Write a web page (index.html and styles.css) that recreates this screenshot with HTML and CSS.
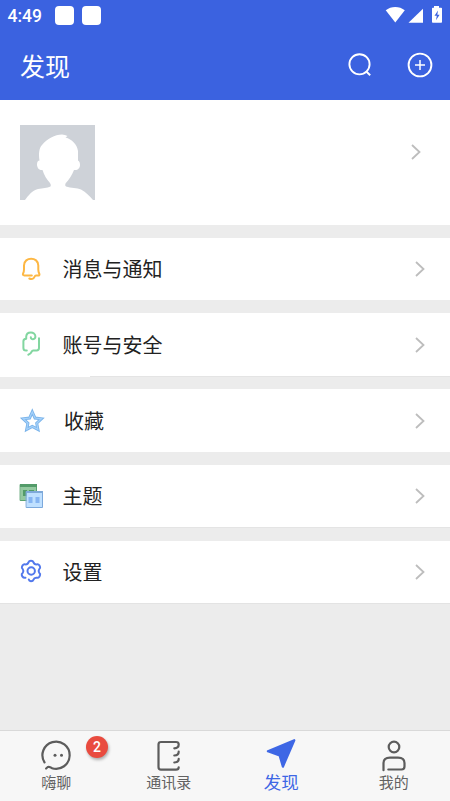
FILE: index.html
```html
<!DOCTYPE html>
<html lang="zh-CN">
<head>
<meta charset="utf-8">
<title>发现</title>
<link rel="stylesheet" href="styles.css">
</head>
<body>
<div class="app">
  <div class="status">
    <span class="clock">4:49</span>
    <i class="chip"></i><i class="chip"></i>
    <svg class="signals" width="60" height="20" viewBox="0 0 60 20">
      <path d="M.7 5.3C6 .8 14.500 .8 19.800 5.300L10.300 17.400z"/>
      <path d="M38 3.700V17.700H23.500z"/>
      <path fill-rule="evenodd" d="M49 1h5v1.700h2.200q.8 0 .8.800V17q0 .8-.8.800h-8.400q-.8 0-.8-.800V3.500q0-.8.800-.8H49zM53 5.500l-3.500 5.200h2.300L51 15.200l3.600-5.500h-2.300z"/>
    </svg>
  </div>
  <header class="header">
    <h1>发现</h1>
    <svg width="26" height="26" viewBox="0 0 26 26"><circle cx="12.500" cy="12.300" r="10.100"/><path d="M19 19.300l4.200 4"/></svg>
    <svg width="26" height="26" viewBox="0 0 26 26"><circle cx="13" cy="13" r="11.400"/><path class="plus" d="M8 13h10M13 8v10"/></svg>
  </header>
  <main>
    <section class="profile">
      <svg class="avatar" width="75" height="75" viewBox="0 0 75 75">
        <rect width="75" height="75" fill="#ced2d8"/>
        <path fill="#fff" d="M5 75C8 71 12 65.500 18 64C23 63 27 63 30.500 61.500Q31.500 60 30 58C26.500 54 24 50 22.500 45C18.500 45.500 17 42 17 39.500C17 37 18 35.500 19.500 35.500C18.500 29 19 23 22 20C27 14 35 9.500 42 9.500Q45 9.500 47.500 11L45.500 12.500C52 14.500 57 19 58 26V35.500C59.500 36 60 38 60 40C60 43 58 45.500 54 45C52 50 49 54.500 45.500 58.500Q44.500 60.500 46 61.500C51 63 57 63 61 64.500C66 67 70 71.500 73 75z"/>
      </svg>
      <svg class="arrow" width="12" height="18" viewBox="0 0 12 18"><path d="M2 2l7.500 7L2 16"/></svg>
    </section>
    <section class="row">
      <svg class="icon bell" width="28" height="28" viewBox="0 0 28 28"><path d="M13.800 20.400H6.300Q4.500 20.400 5 18.700Q6 16.700 6 14.500V10.500C6 1.400 20.300 1.400 20.300 10.500V14.500Q20.300 16.700 21.300 18.700Q22 20.500 20 20.500H18C16.500 20.500 16.600 22.500 15.500 23.300Q13.500 24.700 11.300 23.500"/></svg>
      <span>消息与通知</span>
      <svg class="arrow" width="12" height="18" viewBox="0 0 12 18"><path d="M2 2l7.500 7L2 16"/></svg>
    </section>
    <section class="row tall lined">
      <svg class="icon lock" width="28" height="28" viewBox="0 0 28 28"><path d="M8.800 20.500H8Q5.400 20.500 5.400 18V11.300Q5.400 9 8.200 8.800V6.800C8.400 1 17.400 1.200 17.400 6.500C17.400 9.900 12.600 9.900 12.800 7.200M21 8.300V18Q21 20.400 18.600 20.400H15.300Q14 20.400 13.700 21.700Q12.800 24 10.300 24.800"/></svg>
      <span>账号与安全</span>
      <svg class="arrow" width="12" height="18" viewBox="0 0 12 18"><path d="M2 2l7.500 7L2 16"/></svg>
    </section>
    <section class="row tall favorites">
      <svg class="icon star" width="28" height="28" viewBox="0 0 28 28"><path class="edge" d="M14.300 6l2.700 6 6.400.8-4.700 4.400 1.200 6.200-5.600-3-5.600 3 1.200-6.200-4.700-4.400 6.400-.8z"/><path class="core" d="M14.300 6l2.700 6 6.400.8-4.700 4.400 1.200 6.200-5.600-3-5.600 3 1.200-6.200-4.700-4.400 6.400-.8z"/></svg>
      <span>收藏</span>
      <svg class="arrow" width="12" height="18" viewBox="0 0 12 18"><path d="M2 2l7.500 7L2 16"/></svg>
    </section>
    <section class="row lined theme">
      <svg class="icon" width="28" height="28" viewBox="0 0 28 28">
        <path fill="#94c9a0" stroke="#5aa270" d="M2.500 2.500h16v16h-16z"/><path fill="#539b69" d="M2 2h17v3H2zM5 8h4v6H5zM11 8h5v6h-5z"/>
        <path fill="#bfe0ff" stroke="#7ca9dc" d="M8.500 9.500h16v16h-16z"/><path fill="#7fa9d9" d="M8 9h17v2H8z"/><path fill="#86b5f2" d="M10.500 15h4v6h-4zM17.500 15h4v6h-4z"/>
      </svg>
      <span>主题</span>
      <svg class="arrow" width="12" height="18" viewBox="0 0 12 18"><path d="M2 2l7.500 7L2 16"/></svg>
    </section>
    <section class="row last">
      <svg class="icon gear" width="28" height="28" viewBox="0 0 28 28"><circle cx="13.200" cy="13" r="3.700"/><path d="M7.500 19.700Q5.500 20.100 4.500 18.700L3.800 17.300Q3.300 16 4.800 14.800Q6 13 4.800 11.200Q3.300 10 4 8.600L4.700 7.300Q5.600 5.900 7.400 6.400Q9.800 6.500 10.600 4.200Q11 2.700 13 2.700Q15 2.700 15.400 4.200Q16.200 6.500 18.600 6.400Q20.400 5.900 21.300 7.300L22 8.600Q22.700 10 21.200 11.200Q20 13 21.200 14.800Q22.700 16 22 17.400L21.300 18.700Q20.400 20.100 18.600 19.700Q16.200 19.500 15.400 21.800Q15 23.300 13 23.300Q11.200 23.200 10.800 21.500"/></svg>
      <span>设置</span>
      <svg class="arrow" width="12" height="18" viewBox="0 0 12 18"><path d="M2 2l7.500 7L2 16"/></svg>
    </section>
  </main>
  <nav class="tabs">
    <div class="tab">
      <svg width="32" height="32" viewBox="-.5 0 32 32"><path d="M4 23.400A13.600 13.600 0 1 1 11.500 29.200Q9 27.300 7.300 28L5.600 29.500"/><g class="dots"><circle cx="14.500" cy="16.200" r="1.500"/><circle cx="21" cy="16.200" r="1.500"/></g></svg>
      <span>嗨聊</span><b class="badge">2</b>
    </div>
    <div class="tab">
      <svg width="32" height="32" viewBox="0 0 32 32"><path d="M21.300 9.300Q25.700 9 25.700 5.500Q25.700 3 23 3H8Q5.500 3 5.500 5.500V28Q5.500 30.700 8 30.700H23Q25.700 30.700 25.700 28.300M21.300 16.500Q25.700 16.200 25.700 12.700M21.300 23.500Q25.700 23.200 25.700 19.900"/></svg>
      <span>通讯录</span>
    </div>
    <div class="tab active">
      <svg width="32" height="32" viewBox="-.6 0 32 32"><path d="M28.700 1.200L2.300 12.300L14 16.500L17.300 27.700z"/></svg>
      <span>发现</span>
    </div>
    <div class="tab">
      <svg width="32" height="32" viewBox="0 0 32 32"><circle cx="16" cy="8" r="5.300"/><path d="M5.500 31.200V24Q5.500 18.600 12 18.600H20Q26.500 18.600 26.500 24V27.500Q26.500 30.500 23.500 30.500H10.300"/></svg>
      <span>我的</span>
    </div>
  </nav>
</div>
</body>
</html>
```
FILE: styles.css
```css
* { box-sizing: border-box; }
body { margin: 0; font-family: "Noto Sans CJK SC", sans-serif; background: #ececec; }
.app { width: 450px; height: 801px; display: flex; flex-direction: column; overflow: hidden; }
svg { flex: none; display: block; overflow: visible; }

.status { height: 31px; flex: none; display: flex; align-items: flex-start; padding: 5px 5px 0 7.500px; background: #3b62e0; }
.clock { width: 47px; font: 500 17.500px/22px Roboto, sans-serif; color: #fff; }
.chip { width: 19px; height: 19px; margin: .500px 8.300px 0 0; border-radius: 4px; background: #fff; }
.signals { margin-left: auto; fill: #fff; }

.header { height: 69px; flex: none; display: flex; align-items: flex-start; padding: 21px 17px 0 20px; background: #3b62e0; }
.header h1 { margin: -1px auto 0 0; font-size: 25px; font-weight: 400; line-height: 28px; color: #fff; }
.header svg { margin-left: 34px; fill: none; stroke: #fff; stroke-width: 1.900; }
.header .plus { stroke-width: 1.500; }

main { flex: 1; }
.profile { height: 125px; display: flex; justify-content: space-between; padding: 25px 28px 0 20px; background: #fff; }
.profile .arrow { margin-top: 17.500px; }
.arrow { fill: none; stroke: #bdbdbd; stroke-width: 1.800; }

.row { height: 62px; margin-top: 13px; display: flex; align-items: flex-start; padding: 17px 24.500px 0 18px; background: #fff; font-size: 20px; line-height: 28px; color: #222; }
.row.tall { height: 63px; }
.row.lined { height: 64px; margin-bottom: -1px; background: linear-gradient(#e4e4e4, #e4e4e4) 90px 100% / 100% 1px no-repeat #fff; }
.row.theme { height: 63px; margin-bottom: 0; }
.row.last { height: 63px; border-bottom: 1px solid #e3e3e3; }
.row span { margin-left: 16.500px; }
.row.favorites span { margin-left: 18px; }
.row .arrow { margin: 5px 0 0 auto; }
.row.tall .arrow { margin-top: 5.500px; }
.row.tall span { margin-top: 1px; }
.icon { fill: none; stroke-width: 2; stroke-linecap: round; stroke-linejoin: round; }
.icon path[fill] { stroke-width: 1; stroke-linejoin: miter; }
.bell { stroke: #fdb743; }
.lock { stroke: #82d6a0; }
.gear { stroke: #5278ec; }
.star .edge { stroke: #79b3ea; stroke-width: 3; stroke-linejoin: miter; }
.star .core { stroke: #a5d1fa; stroke-width: 1.200; stroke-linejoin: miter; }

.tabs { height: 71px; flex: none; display: grid; grid-template-columns: repeat(4, 1fr); border-top: 1px solid #d9d9d9; background: #f7f7f7; }
.tab { position: relative; display: flex; flex-direction: column; align-items: center; padding-top: 8px; font-size: 15px; line-height: 22px; color: #626262; }
.tab svg { fill: none; stroke: #5c5c5c; stroke-width: 2.200; stroke-linecap: round; stroke-linejoin: round; }
.tab svg .dots { fill: #5c5c5c; stroke: none; }
.tab.active { font-size: 17.500px; line-height: 21px; color: #3e67e5; }
.tab.active svg { fill: #3e67e5; stroke: #3e67e5; }
.badge { position: absolute; left: 86px; top: 5px; width: 22px; height: 22px; border-radius: 50%; background: #e94b3f; box-shadow: 1px 2px 3px rgba(0, 0, 0, .3); color: #fff; font: 500 14px/23px Roboto, sans-serif; text-align: center; }
```
